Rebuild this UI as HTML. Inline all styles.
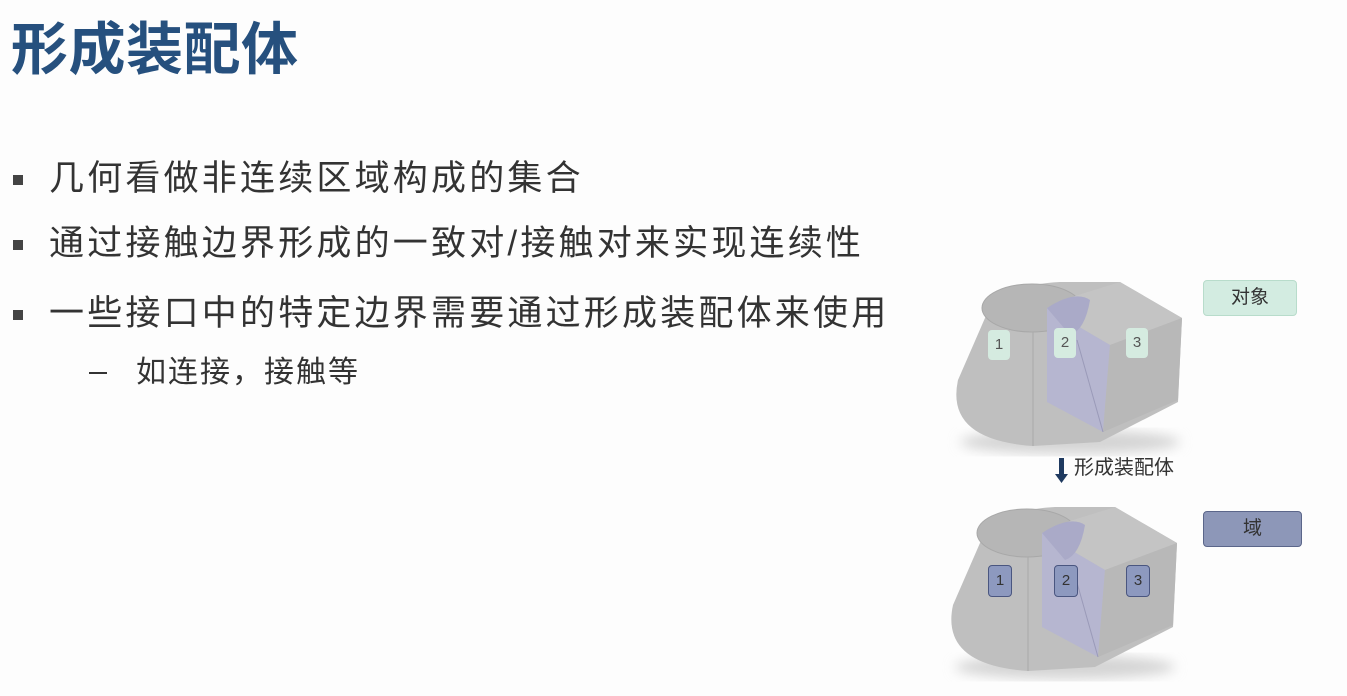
<!DOCTYPE html>
<html><head><meta charset="utf-8"><style>
body{margin:0;width:1347px;height:696px;background:#fdfdfd;overflow:hidden;position:relative;font-family:"Liberation Sans","Noto Sans CJK SC",sans-serif;}
.t{position:absolute;left:11px;top:14px;font-size:57px;font-weight:bold;color:#26507e;line-height:72px;letter-spacing:0.5px}
.b{position:absolute;left:49px;font-size:35px;color:#333;line-height:44px;white-space:nowrap;letter-spacing:3.2px}
.sq{position:absolute;left:13px;width:10px;height:10px;background:#444}
.s{position:absolute;left:136px;top:353px;font-size:30px;color:#333;line-height:40px;letter-spacing:2px}
.d{position:absolute;left:89px;top:372px;width:18px;height:2px;background:#333}
.lab{position:absolute;font-size:19px;color:#333;text-align:center;border-radius:4px;line-height:34px}
</style></head><body>
<div class="t">形成装配体</div>
<div class="sq" style="top:175px"></div><div class="b" style="top:157px">几何看做非连续区域构成的集合</div>
<div class="sq" style="top:240px"></div><div class="b" style="top:222px">通过接触边界形成的一致对/接触对来实现连续性</div>
<div class="sq" style="top:310px"></div><div class="b" style="top:292px">一些接口中的特定边界需要通过形成装配体来使用</div>
<div class="d"></div><div class="s">如连接，接触等</div>

<svg style="position:absolute;left:0;top:0" width="1347" height="696">
<defs><filter id="sh"><feGaussianBlur stdDeviation="6"/></filter>
<g id="shape">
<ellipse cx="1070" cy="442" rx="110" ry="12" fill="#d4d4d4" filter="url(#sh)"/>
<path d="M985,318 L958,380 Q945,440 1033,446 L1100,442 L1178,402 L1182,318 L1120,282 L1060,282 Q1000,285 985,318 Z" fill="#bfbfbf"/>
<ellipse cx="1032" cy="308" rx="50" ry="24" fill="#b6b6b6" stroke="#a8a8a8"/>
<path d="M1120,282 L1182,318 L1110,345 L1047,308 L1075,296 Z" fill="#c4c4c4"/>
<path d="M1047,308 L1110,345 L1103,432 L1047,402 Z" fill="#b6b6d0"/>
<path d="M1047,308 Q1075,290 1090,300 Q1085,330 1070,335 Z" fill="#aaaac8"/>
<path d="M1110,345 L1182,318 L1178,400 L1103,432 Z" fill="#b8b8b8"/>
<line x1="1033" y1="332" x2="1033" y2="446" stroke="#aaa"/>
<line x1="1077" y1="340" x2="1103" y2="432" stroke="#9a9ab8"/>
</g></defs>
<use href="#shape"/>
<use href="#shape" transform="translate(-5,225)"/>
<rect x="1059" y="458" width="5" height="18" fill="#1f3a60"/><path d="M1055,474 L1068,474 L1061.5,483 Z" fill="#1f3a60"/>
<text x="1074" y="474" font-size="20" fill="#333" font-family="Liberation Sans,Noto Sans CJK SC,sans-serif">形成装配体</text>
</svg>
<div class="lab" style="left:1203px;top:280px;width:92px;background:#d3ece1;border:1px solid #b8dccb">对象</div>
<div class="lab" style="left:1203px;top:511px;width:97px;background:#8d97b8;border:1px solid #5b668a">域</div>
<div class="lab" style="left:988px;top:330px;width:22px;height:30px;line-height:30px;font-size:15px;background:#d5ebe0;color:#555">1</div>
<div class="lab" style="left:1054px;top:328px;width:22px;height:30px;line-height:30px;font-size:15px;background:#d5ebe0;color:#555">2</div>
<div class="lab" style="left:1126px;top:328px;width:22px;height:30px;line-height:30px;font-size:15px;background:#d5ebe0;color:#555">3</div>
<div class="lab" style="left:988px;top:565px;width:22px;height:30px;line-height:30px;font-size:15px;background:#8d99bf;border:1px solid #4a5680;color:#333">1</div>
<div class="lab" style="left:1054px;top:565px;width:22px;height:30px;line-height:30px;font-size:15px;background:#8d99bf;border:1px solid #4a5680;color:#333">2</div>
<div class="lab" style="left:1126px;top:565px;width:22px;height:30px;line-height:30px;font-size:15px;background:#8d99bf;border:1px solid #4a5680;color:#333">3</div>
</body></html>
